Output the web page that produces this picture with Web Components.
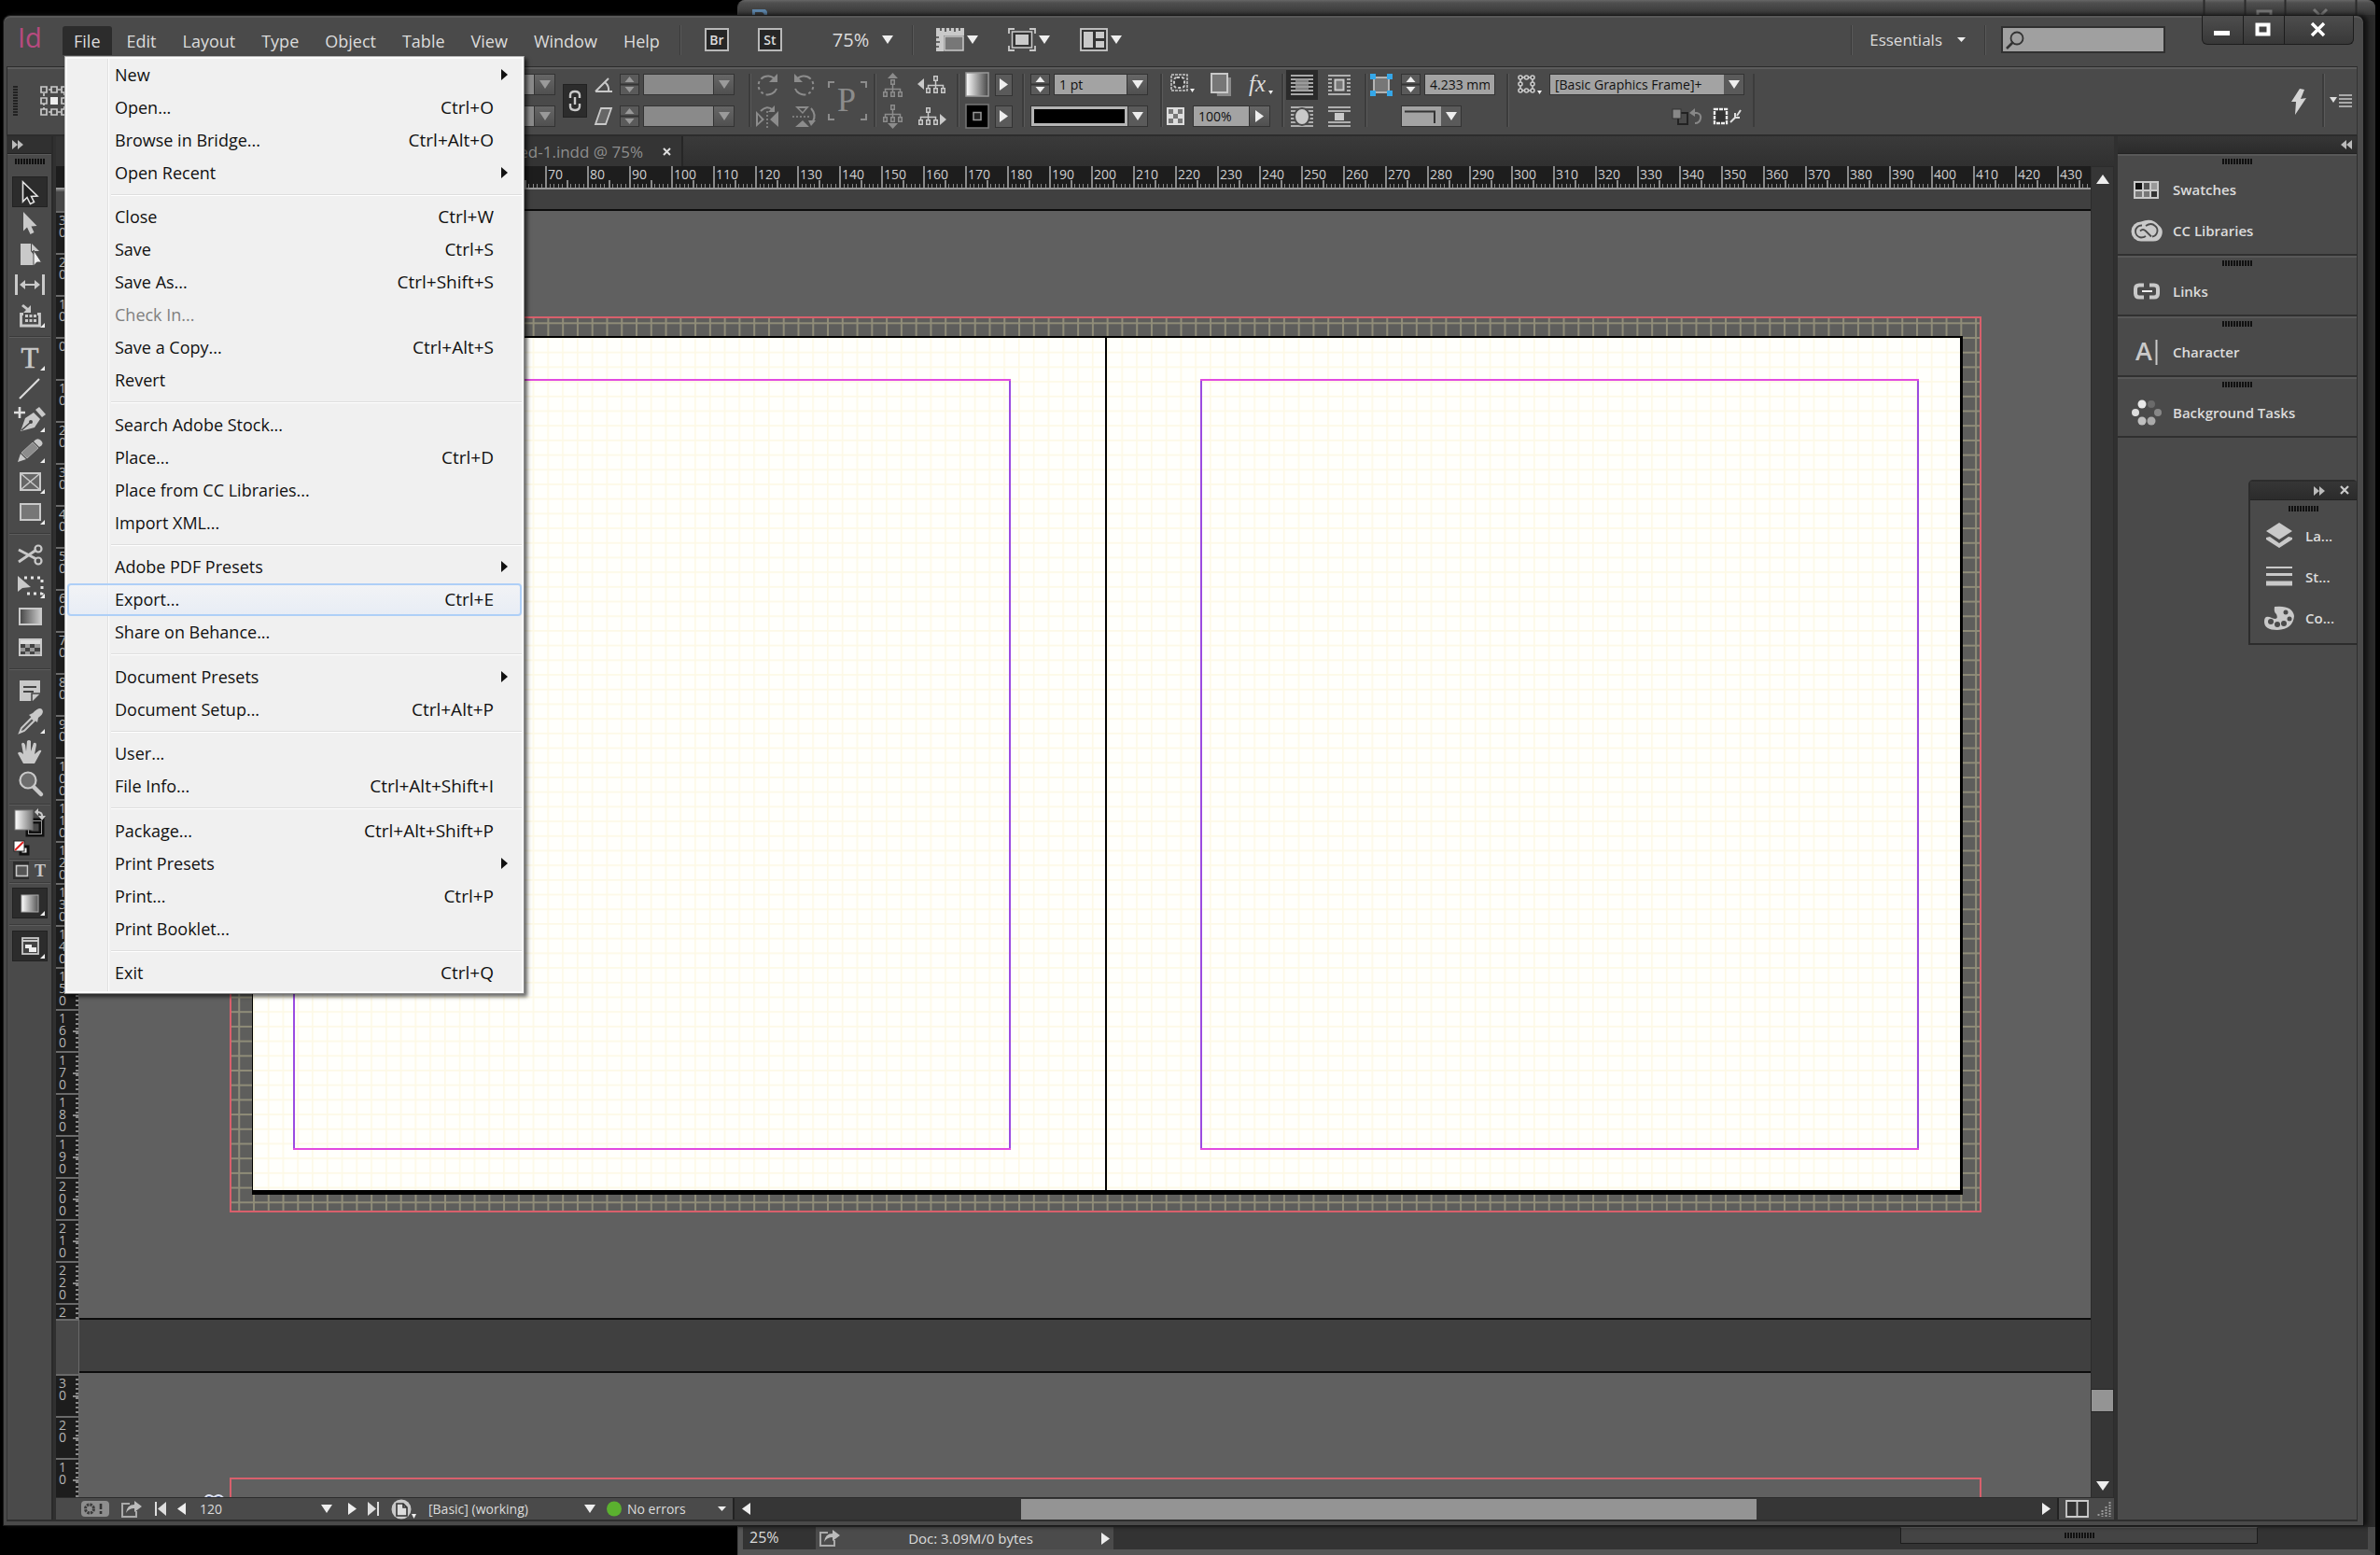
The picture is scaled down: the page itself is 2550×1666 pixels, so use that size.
<!DOCTYPE html>
<html lang="en">
<head>
<meta charset="utf-8">
<title>InDesign</title>
<style>
html,body{margin:0;background:#000}
body{position:relative;display:flex;height:100vh;overflow:hidden;font-family:"Open Sans","Noto Sans",sans-serif;font-size:14px;color:#dcdcdc}
back-window{position:absolute;inset:0 5px 0 790px}
app-window{flex:1;margin:16px 17px 31px 3px}
</style>
</head>
<body>
<back-window></back-window>
<app-window>
  <menu-bar slot="menu"></menu-bar>
  <control-bar slot="control"></control-bar>
  <tool-panel slot="tools"></tool-panel>
  <doc-view slot="doc"></doc-view>
  <dock-area slot="dock">
    <panel-group>
      <panel-tab icon="swatches">Swatches</panel-tab>
      <panel-tab icon="cc">CC Libraries</panel-tab>
    </panel-group>
    <panel-group><panel-tab icon="links">Links</panel-tab></panel-group>
    <panel-group><panel-tab icon="character">Character</panel-tab></panel-group>
    <panel-group><panel-tab icon="tasks">Background Tasks</panel-tab></panel-group>
  </dock-area>
  <float-panel slot="over">
    <panel-tab icon="layers">La...</panel-tab>
    <panel-tab icon="stroke">St...</panel-tab>
    <panel-tab icon="palette">Co...</panel-tab>
  </float-panel>
  <drop-menu slot="over">
    <menu-row arrow>New</menu-row>
    <menu-row key="Ctrl+O">Open...</menu-row>
    <menu-row key="Ctrl+Alt+O">Browse in Bridge...</menu-row>
    <menu-row arrow>Open Recent</menu-row>
    <hr>
    <menu-row key="Ctrl+W">Close</menu-row>
    <menu-row key="Ctrl+S">Save</menu-row>
    <menu-row key="Ctrl+Shift+S">Save As...</menu-row>
    <menu-row disabled>Check In...</menu-row>
    <menu-row key="Ctrl+Alt+S">Save a Copy...</menu-row>
    <menu-row>Revert</menu-row>
    <hr>
    <menu-row>Search Adobe Stock...</menu-row>
    <menu-row key="Ctrl+D">Place...</menu-row>
    <menu-row>Place from CC Libraries...</menu-row>
    <menu-row>Import XML...</menu-row>
    <hr>
    <menu-row arrow>Adobe PDF Presets</menu-row>
    <menu-row key="Ctrl+E" active>Export...</menu-row>
    <menu-row>Share on Behance...</menu-row>
    <hr>
    <menu-row arrow>Document Presets</menu-row>
    <menu-row key="Ctrl+Alt+P">Document Setup...</menu-row>
    <hr>
    <menu-row>User...</menu-row>
    <menu-row key="Ctrl+Alt+Shift+I">File Info...</menu-row>
    <hr>
    <menu-row key="Ctrl+Alt+Shift+P">Package...</menu-row>
    <menu-row arrow>Print Presets</menu-row>
    <menu-row key="Ctrl+P">Print...</menu-row>
    <menu-row>Print Booklet...</menu-row>
    <hr>
    <menu-row key="Ctrl+Q">Exit</menu-row>
  </drop-menu>
</app-window>
<script>
const G='#c9c9c9', DIM='#8c8c8c';
const fly='<path d="M32 23v5h-5z" fill="#eee"/>';
const cursor='M8.5 4V25L13 20.5 16.5 27.5 20.5 25.5 17.5 19.5 24 19Z';
const tree=(c)=>`<path d="M11.5 5v5M3.500 14v-3.500h16V14M11.500 10v4" fill="none" stroke="${c}" stroke-width="1.500"/><path d="M9 0h5v6H9zM1 13h5v6H1zM9 13h5v6H9zM17 13h5v6h-5z" fill="${c}"/><path d="M10.500 1.500h2v3h-2zM2.500 14.500h2v3h-2zM10.500 14.500h2v3h-2zM18.500 14.500h2v3h-2z" fill="#4a4a4a"/>`;
const lines=(a)=>a.map(y=>`<path d="M0 ${y}h24" stroke="${G}" stroke-width="1.600"/>`).join('');
const grad=(id,a,b)=>`<defs><linearGradient id="${id}"><stop offset="0" stop-color="${a}"/><stop offset="1" stop-color="${b}"/></linearGradient></defs>`;
const ICONS={
 // tools
 select:[32,30,`<path d="${cursor}" fill="#222" stroke="#e4e4e4" stroke-width="1.600"/>`],
 direct:[32,30,`<path d="M9 3V23.500L13 19.500 16.500 27 20.500 25 17.500 18.500 23.500 18Z" fill="${G}"/>`],
 page:[32,30,`<path d="M6 4h11v8l4 5v10H6z" fill="${G}"/><path d="M18 4l8 8h-8z" fill="${G}"/><path d="M20 11v17l3.500-4 5 0z" fill="#eee" stroke="#4a4a4a"/>`],
 gap:[32,30,`<path d="M1.500 4v22M30.500 4v22" stroke="${G}" stroke-width="3"/><path d="M7 15h18" stroke="${G}" stroke-width="2"/><path d="M5 15l6-5v10zM27 15l-6-5v10z" fill="${G}"/>`],
 collect:[32,30,`<path d="M6 13.500H9M24 13.500h3M6.500 12v14h20V12" fill="none" stroke="${G}" stroke-width="2.800"/><path d="M11 14h3v3h-3zM15.500 14h3v3h-3zM20 14h3v3h-3zM11 19h3v3h-3zM15.500 19h3v3h-3zM20 19h3v3h-3z" fill="${G}"/><path d="M9 3l5 4 3-3v8H9l3-3-5-4z" fill="${G}"/>${fly}`],
 type:[32,30,`<text x="16" y="25" text-anchor="middle" font-family="Liberation Serif" font-size="31" fill="${G}" stroke="${G}" stroke-width="0.600">T</text>${fly}`],
 line:[32,30,`<path d="M5 25L26 4" stroke="#ddd" stroke-width="2.200"/>`],
 pen:[32,30,`<path d="M5 1v12M-1 7h12" stroke="#ddd" stroke-width="2.600"/><path d="M6 27l5-14 9-6 7 7-6 9z" fill="${G}"/><path d="M22 4l4-3 7 8-4 3z" fill="${G}"/><path d="M7 26l9-8" stroke="#444" stroke-width="1.500"/><circle cx="17" cy="17" r="2" fill="#444"/>${fly}`],
 pencil:[32,30,`<path d="M3 27l3-9 6 6z" fill="${G}"/><path d="M7 17L19 6l6 6-12 11z" fill="#8c8c8c" stroke="#aaa"/><path d="M20 5q4-5 8-1t-2 7z" fill="${G}"/>${fly}`],
 frame:[32,30,`<rect x="6" y="6" width="21" height="18" fill="#666" stroke="${G}" stroke-width="2"/><path d="M7 7l19 16M26 7L7 23" stroke="${G}" stroke-width="1.500"/>${fly}`],
 rect:[32,30,`<rect x="6" y="6" width="21" height="17" fill="#777" stroke="${G}" stroke-width="2"/>${fly}`],
 scissors:[32,30,`<path d="M4 9l19 10M4 22L23 9" stroke="${G}" stroke-width="3"/><circle cx="25" cy="8" r="3.500" fill="none" stroke="${G}" stroke-width="2.200"/><circle cx="25" cy="21" r="3.500" fill="none" stroke="${G}" stroke-width="2.200"/>`],
 transform:[32,30,`<path d="M3 4v17l5-4 9-1z" fill="${G}"/><path d="M10 6h19v17H11" fill="none" stroke="#e4e4e4" stroke-width="3" stroke-dasharray="3 4"/>${fly}`],
 gradient:[32,30,`${grad('ga','#444','#ccc')}<rect x="5" y="6" width="23" height="17" fill="url(#ga)" stroke="${G}" stroke-width="2"/>`],
 feather:[32,30,`<rect x="5" y="6" width="23" height="17" fill="#999" stroke="${G}" stroke-width="2"/><path d="M6 11h5v4H6zM16 11h5v4h-5zM11 15h5v4h-5zM21 15h6v4h-6zM6 19h5v3H6zM16 19h5v3h-5z" fill="#444"/><path d="M6 7h21v4H6z" fill="#ddd"/>`],
 note:[32,30,`<path d="M5 4h22v14l-8 8H5z" fill="${G}"/><path d="M9 11h14M9 16h11" stroke="#444" stroke-width="2"/><path d="M18 27v-9h9" fill="none" stroke="#444" stroke-width="1.500"/>`],
 dropper:[32,30,`<path d="M5 27l2-5L18 11l3 3-11 11z" fill="#555" stroke="${G}" stroke-width="2"/><path d="M15 8l4-2q7-7 10-4 3 4-4 9l-1 5z" fill="${G}"/>${fly}`],
 hand:[32,30,`<path d="M9 27L3 16q2-3 6 1L7 6q2-3 4 1l1 7 1-11q2-2 4 0v11l3-9q3-1 3 2l-2 10 5-4q4-1 1 3l-6 11z" fill="${G}"/>`],
 zoom:[32,30,`<path d="M19 18l9 9" stroke="${G}" stroke-width="4.500" stroke-linecap="round"/><circle cx="14" cy="12" r="8.500" fill="#6d6d6d" stroke="${G}" stroke-width="2.200"/>`],
 fillstroke:[34,36,`${grad('gb','#fff','#777')}<rect x="15.500" y="14.500" width="14" height="14" fill="none" stroke="#111" stroke-width="6"/><rect x="15.500" y="14.500" width="14" height="14" fill="none" stroke="#999"/><rect x="1" y="3" width="19" height="21" fill="url(#gb)" stroke="#777"/><path d="M25 5q6 0 5 6" fill="none" stroke="${G}" stroke-width="2"/><path d="M22 5l4-4v8zM26 9h8l-4 5z" fill="${G}"/>`],
 defaults:[34,20,`<rect x="9" y="8" width="8" height="8" fill="#eee" stroke="#111" stroke-width="3"/><rect x="2" y="2" width="11" height="11" fill="#fff" stroke="#222"/><path d="M3 12L12 3" stroke="#d22" stroke-width="2"/>`],
 container:[38,22,`<rect x="1" y="1" width="17" height="19" fill="#2c2c2c"/><rect x="4.500" y="5.500" width="12" height="11" fill="#555" stroke="${G}" stroke-width="1.600"/><text x="30" y="17" text-anchor="middle" font-family="Liberation Serif" font-weight="bold" font-size="18" fill="${G}">T</text>`],
 gradmode:[32,30,`${grad('gc','#fff','#555')}<rect x="7" y="6" width="18" height="18" fill="url(#gc)" stroke="#aaa"/>${fly}`],
 screen:[32,30,`<rect x="8" y="6" width="17" height="17" fill="#444" stroke="${G}" stroke-width="1.800"/><path d="M8 9h17" stroke="${G}" stroke-width="2"/><path d="M11 13h7v4h-7zM15 16h8v5h-8z" fill="#eee"/>${fly}`],
 // panels
 swatches:[34,30,`<rect x="3" y="6" width="27" height="19" fill="${G}"/><path d="M5 8h7v7H5z" fill="#111"/><path d="M14 8h6v7h-6z" fill="#555"/><path d="M22 8h6v7h-6z" fill="#999"/><path d="M5 17h7v6H5zM14 17h6v6h-6z" fill="#777"/><path d="M22 17h6v6h-6z" fill="#333"/>`],
 cc:[34,30,`<path d="M11 26.500a10.500 10.500 0 0 1 0-21q12-5 19 4a9.500 9.500 0 0 1-6 17z" fill="${G}"/><path d="M12 9.500a6.500 6.500 0 0 0-1 13q3 0 5-1.500M10 15.500q3-3 6 0l6 6M16 10q6-4 10 0a6.500 6.500 0 0 1-3 11.500" fill="none" stroke="#4a4a4a" stroke-width="1.800"/>`],
 links:[34,30,`<path d="M14 8.500H9q-4 0-4 4v5q0 4 4 4h5M20 8.500h5q4 0 4 4v5q0 4-4 4h-5" fill="none" stroke="${G}" stroke-width="4"/><path d="M12 15h11" stroke="#eee" stroke-width="2"/>`],
 character:[34,30,`<text x="5" y="24" font-family="Open Sans" font-weight="600" font-size="27" fill="${G}">A</text><path d="M27.500 2v27" stroke="${G}" stroke-width="2"/>`],
 tasks:[34,30,`<circle cx="12" cy="6" r="4.500" fill="#e8e8e8"/><circle cx="22" cy="6" r="4" fill="#6a6a6a"/><circle cx="29" cy="15" r="4" fill="#888"/><circle cx="22" cy="24" r="4.500" fill="#aaa"/><circle cx="12" cy="24" r="4.500" fill="#c0c0c0"/><circle cx="5" cy="15" r="4" fill="#ddd"/>`],
 layers:[34,30,`<path d="M17 1l14 9-14 9-14-9z" fill="${G}"/><path d="M3 17l4-1 10 7 10-7 4 1v2l-14 9-14-9z" fill="${G}"/>`],
 stroke:[34,30,`<path d="M3 5h28" stroke="${G}" stroke-width="2"/><path d="M3 12.500h28" stroke="${G}" stroke-width="3"/><path d="M3 22h28" stroke="${G}" stroke-width="5"/>`],
 palette:[34,30,`<path d="M12 3q19-2 21 10-1 14-18 15Q1 28 1 19q0-8 8-4 8 3 5-4-3-2-2-8z" fill="${G}"/><g fill="#4a4a4a"><circle cx="8" cy="19" r="3"/><circle cx="15" cy="22" r="3"/><circle cx="22" cy="21" r="3"/><circle cx="28" cy="16" r="2.500"/><circle cx="24" cy="9" r="2.500"/></g>`],
 // application bar
 rulers:[30,25,`<path d="M0 0h30v8H8v17H0z" fill="${G}"/><path d="M5 0v3M10 0v4M15 0v3M20 0v4M25 0v3M0 10h3M0 15h4M0 20h3" stroke="#444" stroke-width="1.600"/><rect x="9" y="9" width="20" height="15" fill="#777" stroke="${G}" stroke-width="1.500"/>`],
 fitpage:[30,25,`<path d="M1 6V1h6M23 1h6v5M29 19v5h-6M7 24H1v-5" fill="none" stroke="${G}" stroke-width="1.800"/><rect x="4.500" y="4" width="21" height="17" fill="#333" stroke="${G}" stroke-width="1.500"/><rect x="8" y="7" width="14" height="11" fill="${G}"/>`],
 arrange:[30,25,`<rect x="1" y="1" width="28" height="23" fill="#333" stroke="${G}" stroke-width="1.800"/><path d="M4 4h10v17H4zM17 4h9v7h-9zM17 14h9v7h-9z" fill="${G}"/>`],
 lens:[22,22,`<circle cx="13" cy="9" r="6.500" fill="none" stroke="#333" stroke-width="1.800"/><path d="M9 13l-7 7" stroke="#333" stroke-width="2.600"/>`],
 min:[18,16,`<path d="M0 9h17v5H0z" fill="#fff"/>`],
 max:[18,16,`<rect x="2.500" y="2.500" width="12" height="10" fill="none" stroke="#fff" stroke-width="4"/>`],
 close:[18,16,`<path d="M2 1l13 13M15 1L2 14" stroke="#fff" stroke-width="3.400"/>`],
 dn:[12,9,`<path d="M0 0h12L6 9z" fill="#eee"/>`],
 dnd:[12,9,`<path d="M0 0h12L6 9z" fill="#9a9a9a"/>`],
 dns:[9,5,`<path d="M0 0h9L4.500 5z" fill="#eee"/>`],
 up:[14,10,`<path d="M0 10h14L7 0z" fill="#eee"/>`],
 down:[14,10,`<path d="M0 0h14L7 10z" fill="#eee"/>`],
 rt:[9,13,`<path d="M0 0v13l9-6.500z" fill="#eee"/>`],
 lt:[9,13,`<path d="M9 0v13L0 6.500z" fill="#eee"/>`],
 first:[12,15,`<path d="M1 0v15" stroke="#ddd" stroke-width="2"/><path d="M12 0v15L3 7.500z" fill="#ddd"/>`],
 last:[12,15,`<path d="M11 0v15" stroke="#ddd" stroke-width="2"/><path d="M0 0v15l9-7.500z" fill="#ddd"/>`],
 chr:[12,10,`<path d="M0 0l6 5-6 5zM6 0l6 5-6 5z" fill="#bbb"/>`],
 chl:[12,10,`<path d="M6 0L0 5l6 5zM12 0L6 5l6 5z" fill="#bbb"/>`],
 x:[12,11,`<path d="M2 1l8 8M10 1L2 9" stroke="#ccc" stroke-width="2.200"/>`],
 xs:[9,9,`<path d="M1 1l7 7M8 1L1 8" stroke="#ddd" stroke-width="2"/>`],
 // control bar
 proxy:[30,32,`<g fill="none" stroke="${G}" stroke-width="1.700"><path d="M4 4h22v24H4z" stroke-dasharray="3 2"/><path d="M1 1h6v6H1zM12 1h6v6h-6zM23 1h6v6h-6zM1 13h6v6H1zM23 13h6v6h-6zM1 25h6v6H1zM12 25h6v6h-6zM23 25h6v6h-6z" fill="#4a4a4a"/></g><path d="M11 12h8v8h-8z" fill="#eee"/>`],
 chain:[14,24,`<g fill="none" stroke="${G}" stroke-width="2.400"><path d="M2 9V6q0-4 5-4t5 4v3M2 15v3q0 4 5 4t5-4v-3"/><path d="M7 8v8"/></g>`],
 angle:[20,16,`<path d="M1 15L15 1M1 15h18M11 5q5 4 4 10" fill="none" stroke="${G}" stroke-width="2"/>`],
 shear:[20,20,`<path d="M7 1h11l-6 17H1z" fill="#666" stroke="${G}" stroke-width="1.800"/>`],
 cw:[26,24,`<path d="M22 7A10 10 0 1 0 23 16" fill="none" stroke="${DIM}" stroke-width="2" stroke-dasharray="18 3 3 3 3 3 3 3"/><path d="M24 0v9h-9z" fill="${DIM}"/>`],
 ccw:[26,24,`<path d="M4 7A10 10 0 1 1 3 16" fill="none" stroke="${DIM}" stroke-width="2" stroke-dasharray="18 3 3 3 3 3 3 3"/><path d="M2 0v9h9z" fill="${DIM}"/>`],
 fliph:[26,24,`<path d="M1 6v17l9-8zM25 6v17l-9-8z" fill="${DIM}"/><path d="M13 6v18" stroke="${DIM}" stroke-width="1.600" stroke-dasharray="2 2"/><path d="M6 6q7-7 13-1" fill="none" stroke="${DIM}" stroke-width="2"/><path d="M21 0v7h-7z" fill="${DIM}"/><path d="M3 10v9l4-4z" fill="#4a4a4a"/>`],
 flipv:[26,24,`<path d="M3 1h15l-7 8zM3 23h15l-7-7z" fill="${DIM}"/><path d="M0 12h20" stroke="${DIM}" stroke-width="1.600" stroke-dasharray="2 2"/><path d="M20 3q6 7 2 14" fill="none" stroke="${DIM}" stroke-width="2"/><path d="M17 16h8l-5 6z" fill="${DIM}"/><path d="M7 3h7l-3 4z" fill="#4a4a4a"/>`],
 pframe:[42,42,`<path d="M1 7V1h6M35 1h6v6M41 35v6h-6M7 41H1v-6" fill="none" stroke="${DIM}" stroke-width="2"/><text x="20" y="32" text-anchor="middle" font-family="Liberation Serif" font-size="36" fill="${DIM}">P</text>`],
 treeup:[24,26,`<path d="M6 6h11l-5.500-6z" fill="${DIM}"/><g transform="translate(0 7)">${tree(DIM)}</g>`],
 treedn:[24,26,`<path d="M6 20h11l-5.500 6z" fill="${DIM}"/>${tree(DIM)}`],
 treel:[32,20,`<path d="M7 3v12L0 9z" fill="${G}"/><g transform="translate(8 0)">${tree(G)}</g>`],
 treer:[32,20,`<path d="M24 7v12l7-6z" fill="${G}"/>${tree(G)}`],
 fill:[26,27,`${grad('gd','#fff','#444')}<rect x="1" y="1" width="24" height="25" fill="url(#gd)" stroke="#999" stroke-width="1.500"/>`],
 strokebox:[26,27,`<rect x="1" y="1" width="24" height="25" fill="#000" stroke="#777" stroke-width="1.500"/><rect x="9" y="9.500" width="8" height="8" fill="#222" stroke="#999" stroke-width="1.500"/>`],
 dash:[26,22,`<rect x="1" y="2" width="17" height="17" fill="none" stroke="${G}" stroke-width="1.500" stroke-dasharray="3 1"/><rect x="4" y="5" width="11" height="11" rx="3" fill="#3a3a3a" stroke="${G}" stroke-width="2" stroke-dasharray="3 2"/><path d="M21 17h5l-2.500 4z" fill="#eee"/>`],
 shadow:[24,26,`<path d="M5 5h17v20H7z" fill="#8a8a8a"/><rect x="1" y="1" width="17" height="20" fill="#777" stroke="${G}" stroke-width="2"/>`],
 fx:[26,26,`<text x="0" y="20" font-family="Liberation Serif" font-style="italic" font-size="25" fill="#ddd">fx</text><path d="M21 19h5l-2.500 4z" fill="#eee"/>`],
 opacity:[19,19,`<rect width="19" height="19" fill="#ddd"/><path d="M2 2h5v5H2zM12 2h5v5h-5zM7 7h5v5H7zM2 12h5v5H2zM12 12h5v5h-5z" fill="#777"/>`],
 wrap0:[24,24,`${lines([2,6,10,14,18,22])}<rect x="5" y="5" width="14" height="13" fill="#999" opacity=".8"/>`],
 wrap1:[24,24,`${lines([2,6,10,14,18,22])}<rect x="4" y="4" width="16" height="16" fill="#4a4a4a"/><rect x="7.500" y="6.500" width="9" height="11" fill="#777" stroke="${G}" stroke-width="2"/>`],
 wrap2:[24,24,`${lines([2,6,10,14,18,22])}<ellipse cx="12" cy="12" rx="8" ry="9" fill="${G}" stroke="#4a4a4a" stroke-width="2"/>`],
 wrap3:[24,24,`${lines([2,6,18,22])}<path d="M7 8h10v8H7z" fill="${G}"/>`],
 corner:[24,24,`<rect x="4" y="4" width="16" height="16" fill="#777" stroke="${G}" stroke-width="1.600"/><path d="M0 0h6v6H0zM18 0h6v6h-6zM0 18h6v6H0zM18 18h6v6h-6z" fill="#35a7e8"/>`],
 cornerline:[36,16,`<path d="M0 3.500h32V16" fill="none" stroke="#333" stroke-width="2"/>`],
 objstyle:[26,22,`<g fill="none" stroke="${G}" stroke-width="1.600"><path d="M3 3h13v14H3z"/><circle cx="3" cy="3" r="2" fill="#444"/><circle cx="9.500" cy="3" r="2" fill="#444"/><circle cx="16" cy="3" r="2" fill="#444"/><circle cx="3" cy="10" r="2" fill="#444"/><circle cx="16" cy="10" r="2" fill="#444"/><circle cx="3" cy="17" r="2" fill="#444"/><circle cx="9.500" cy="17" r="2" fill="#444"/><circle cx="16" cy="17" r="2" fill="#444"/></g><path d="M21 17h5l-2.500 4z" fill="#eee"/>`],
 clear:[34,20,`<path d="M8 6h10v12H8z" fill="none" stroke="#222" stroke-width="2"/><rect x="2" y="2" width="9" height="10" fill="#888" stroke="#333"/><path d="M23 6h5q5 1 4 6t-6 5" fill="none" stroke="#888" stroke-width="2"/><path d="M20 6l6-5v9z" fill="#888"/>`],
 clear2:[30,20,`<rect x="1" y="2" width="13" height="15" fill="#333" stroke="#eee" stroke-width="2.400" stroke-dasharray="4 1"/><path d="M18 16l5-5M23 11v-5M23 11h5M25 9l4-6" stroke="#ddd" stroke-width="2"/>`],
 bolt:[18,28,`<path d="M10 0L1 14l5 0-1 14L17 10l-6 1 4-10z" fill="#d4d4d4"/>`],
 flyout:[24,16,`<path d="M0 4h8l-4 6z" fill="#ddd"/><path d="M10 2h14M10 6h14M10 10h14M10 14h14" stroke="${G}" stroke-width="1.500"/>`],
 spin:[21,23,`<rect x=".5" y=".5" width="20" height="22" fill="#5a5a5a" stroke="#333"/><path d="M0 11.500h21" stroke="#333" stroke-width="2"/><path d="M5.500 9h10l-5-6zM5.500 14h10l-5 6z" fill="var(--tri,#eee)"/>`],
 // status bar
 preflight:[30,17,`<rect width="30" height="17" rx="4" fill="#8e8e8e"/><circle cx="9" cy="8.500" r="4.500" fill="none" stroke="#3c3c3c" stroke-width="3" stroke-dasharray="2.500 1"/><path d="M21 3v6M21 11v3" stroke="#333" stroke-width="2.600"/>`],
 share:[22,18,`<path d="M9 3H1v14h15v-6" fill="none" stroke="#aaa" stroke-width="2"/><path d="M5 13q1-9 9-9V0l8 6-8 6V8q-6 0-9 5z" fill="#bbb"/>`],
 docbtn:[28,22,`<ellipse cx="11" cy="11" rx="10.500" ry="10.500" fill="${G}"/><path d="M6 5h7l4 4v9H6zM13 5v4h4" fill="#ddd" stroke="#333" stroke-width="1.600"/><path d="M22 16h5l-2.500 5z" fill="#eee"/>`],
 ok:[16,17,`<circle cx="8" cy="8.500" r="8" fill="#5bb12f"/>`],
 split:[25,19,`<path d="M1 1h23v17H1zM12.500 1v17" fill="#333" stroke="#ccc" stroke-width="1.800"/>`],
 grip:[16,16,`<path d="M14.500 0v16M10.500 5v11M6.500 9v7M2.500 13v3" stroke="#999" stroke-width="2" stroke-dasharray="2 1"/>`]
};
const comp=(name,html,init)=>{
  const t=document.createElement('template');
  t.innerHTML=html;
  customElements.define(name,class extends HTMLElement{
    constructor(){super();this.attachShadow({mode:'open'}).append(t.content.cloneNode(true))}
    connectedCallback(){init&&init.call(this,this.shadowRoot)}
  });
};
const base=`<style>:host,*{box-sizing:border-box}button,input,select{font:inherit;color:inherit;background:none;border:0;padding:0;margin:0;border-radius:0;appearance:none;outline:0}button{display:flex;align-items:center;justify-content:center}</style>`;
const gripCss='width:32px;height:6px;background:repeating-linear-gradient(90deg,#111 0 2px,#4a4a4a 2px 3px)';

comp('ui-icon','<style>:host{display:block;flex:none}svg{display:block;overflow:visible}</style>',function(r){
  const [w,h,s]=ICONS[this.getAttribute('name')];
  r.innerHTML+=`<svg width="${w}" height="${h}" viewBox="0 0 ${w} ${h}" aria-hidden="true">${s}</svg>`;
});

comp('back-window',base+`<style>
:host{display:flex;flex-direction:column;justify-content:space-between;border-radius:8px 8px 0 0;background:#2b2b2b;overflow:hidden;border-left:1px solid #444}
.top{height:16px;background:linear-gradient(#666,#4f4f4f 3px,#363636);display:flex;justify-content:space-between;padding:0 12px 0 15px;align-items:end}
.top svg{display:block}
.bot{height:30px;background:#333;border-bottom:6px solid #555;border-left:5px solid #555;display:flex;border-right:8px solid #4a4a4a}
.zoom{width:78px;padding-left:7px;font-size:16px;line-height:22px;background:#333}
.info{width:319px;display:flex;align-items:center;padding:0 4px;background:#4b4b4b;font-size:15px;justify-content:space-between}
.tray{width:383px;height:18px;margin-left:auto;margin-right:118px;background:#444;border:1px solid #1c1c1c;border-top-color:#666;display:flex;justify-content:center;align-items:center}
.tray i{${gripCss}}
</style><div class="top"><svg width="16" height="6"><path d="M1 6V1h9q4 0 5 5" fill="none" stroke="#5d86ab" stroke-width="4"/></svg>
<svg width="174" height="16"><path d="M2.500 0v16M46.500 0v16M89.500 0v16M165.500 0v16" stroke="#2a2a2a" stroke-width="2"/><path d="M60 16v-4h14v4M120 10l6 6M134 10l-6 6" fill="none" stroke="#777" stroke-width="3"/></svg></div>
<div class="bot"><div class="zoom">25%</div><div class="info"><ui-icon name="share"></ui-icon><span>Doc: 3.09M/0 bytes</span><ui-icon name="rt"></ui-icon></div><div class="tray"><i></i></div></div>`);

comp('app-window',base+`<style>
:host{display:flex;flex-direction:column;position:relative;min-width:0;background:#4a4a4a;border:1px solid #1a1a1a;border-right-color:#111;border-radius:8px 8px 0 0;box-shadow:inset 0 2px #585858,4px 0 5px #111;padding:0 6px 4px 3px}
.main{flex:1;display:flex;min-height:0;border-right:1px solid #2e2e2e;border-bottom:2px solid #2e2e2e}
slot[name=over]{display:contents}
</style><slot name="menu"></slot><slot name="control"></slot><div class="main"><slot name="tools"></slot><slot name="doc"></slot><slot name="dock"></slot></div><slot name="over"></slot>`);

comp('menu-bar',base+`<style>
:host{display:flex;height:54px;font-size:18px;color:#dcdcdc;align-items:flex-start;flex:none}
.logo{width:58px;padding-left:12px;font:29px/46px "Open Sans",sans-serif;color:#b84a80}
nav{display:flex;padding-top:11px}
nav button{height:31px;padding:0 12px;margin:0 2px}
nav button.on{background:#2c2c2c;border-radius:3px 3px 0 0}
i{width:2px;height:32px;margin-top:10px;background:#3a3a3a;border-right:1px solid #595959;flex:none}
.app{width:26px;height:25px;border:2px solid #b9b9b9;background:#262626;font-size:14px;font-weight:600;line-height:1}
.row{display:flex;align-items:center;height:51px}
select{font-size:20px;width:44px}
.ess{font-size:17px;display:flex;gap:16px}
label{display:flex;align-items:center;width:176px;height:29px;background:#a0a0a0;border:2px solid #303030;padding-left:2px}
input{flex:1;min-width:0}
.win{display:flex;height:31px;width:163px;margin:0 4px 0 39px;border:1px solid #1d1d1d;border-top:0;border-radius:0 0 6px 6px;background:linear-gradient(#4d4d4d,#383838)}
.win button{flex:44;border-right:1px solid #1d1d1d}.win button:last-child{flex:75;border:0}
</style><div class="logo">Id</div>
<nav><button class="on">File</button><button>Edit</button><button>Layout</button><button>Type</button><button>Object</button><button>Table</button><button>View</button><button>Window</button><button>Help</button></nav>
<i style="margin-left:7px"></i>
<div class="row" style="margin-left:25px;gap:31px"><button class="app">Br</button><button class="app">St</button></div>
<div class="row" style="margin:0 20px 0 54px;gap:9px"><select aria-label="Zoom level"><option>75%</option></select><ui-icon name="dn"></ui-icon></div>
<i></i>
<div class="row" style="margin-left:24px;gap:32px"><button style="gap:3px" aria-label="View options"><ui-icon name="rulers"></ui-icon><ui-icon name="dn"></ui-icon></button><button style="gap:3px" aria-label="Screen mode"><ui-icon name="fitpage"></ui-icon><ui-icon name="dn"></ui-icon></button><button style="gap:3px" aria-label="Arrange documents"><ui-icon name="arrange"></ui-icon><ui-icon name="dn"></ui-icon></button></div>
<i style="margin-left:auto"></i>
<div class="row" style="padding:0 20px 0 18px"><button class="ess">Essentials<ui-icon name="dns"></ui-icon></button></div>
<i></i>
<div class="row" style="margin-left:16px"><label aria-label="Search"><ui-icon name="lens"></ui-icon><input aria-label="Search"></label></div>
<div class="win"><button aria-label="Minimize"><ui-icon name="min"></ui-icon></button><button aria-label="Maximize"><ui-icon name="max"></ui-icon></button><button aria-label="Close"><ui-icon name="close"></ui-icon></button></div>`);

comp('num-field',base+`<style>
:host{display:flex;flex:none;height:23px;border:1px solid #333;background:#5a5a5a;font-size:14px;color:#111}
input{flex:1;min-width:0;background:#a3a3a3;padding:0 5px}
:host([dim]) input{background:#8a8a8a}
button{width:22px;border-left:1px solid #333;background:linear-gradient(#666,#505050)}
</style><input><button aria-label="Options"></button>`,function(r){
  const i=r.querySelector('input'),b=r.querySelector('button');
  i.value=this.getAttribute('value')||'';i.setAttribute('aria-label',this.getAttribute('label'));
  const a=this.getAttribute('arrow');
  if(a)b.innerHTML=`<ui-icon name="${a}"></ui-icon>`;else b.remove();
});

comp('control-bar',base+`<style>
:host{display:flex;height:75px;flex:none;border:1px solid #2c2c2c;border-bottom-width:2px;border-right-color:#333;box-shadow:inset 0 2px #5c5c5c;padding-top:7px;color:#ddd}
section{display:grid;grid-template-rows:23px 23px;row-gap:11px;column-gap:4px;align-content:start;align-items:center;justify-content:start;flex:none;height:57px;border-left:2px solid #3c3c3c;box-shadow:inset 1px 0 #5a5a5a}
section>*{grid-row:1}section>.b{grid-row:2}section>.two{grid-row:1/3}
.sq{width:19px;height:24px;border:1px solid #333;background:#5a5a5a}
.lk{width:26px;height:36px;background:#2c2c2c;border:1px solid #222}
.on{width:34px;height:32px;background:#2a2a2a}
.grip{width:5px;height:32px;margin:13px 24px 0 6px;background:repeating-linear-gradient(#222 0 2px,#4a4a4a 2px 3px)}
select{height:22px;background:#a3a3a3;border:1px solid #333;color:#111;font-size:14px;padding:0 5px}
.line{width:104px;height:21px;background:#000;border:3px solid #b4b4b4;outline:1px solid #333}
.combo{display:flex;border:1px solid #333;background:#5a5a5a;height:23px}.combo>button{width:21px}.combo>select{border:0;height:21px}
.geo{border:0;box-shadow:none;margin-left:447px;width:282px;grid-template-columns:75px 42px 27px 25px 98px;column-gap:0}
.geo .lk{margin-left:8px}
</style>
<div class="grip"></div><ui-icon name="proxy" style="margin-top:13px"></ui-icon>
<section class="geo">
<num-field dim label="Scale X" arrow="dnd"></num-field><button class="lk two" aria-label="Constrain"><ui-icon name="chain"></ui-icon></button><ui-icon name="angle"></ui-icon><ui-icon name="spin" style="--tri:#999"></ui-icon><num-field dim label="Rotation" arrow="dnd"></num-field>
<num-field class="b" dim label="Scale Y" arrow="dnd"></num-field><ui-icon class="b" name="shear" style="grid-column:3"></ui-icon><ui-icon class="b" name="spin" style="grid-column:4;--tri:#999"></ui-icon><num-field class="b" dim label="Shear" arrow="dnd" style="grid-column:5"></num-field>
</section>
<section style="width:134px;padding-left:5px;column-gap:14px"><ui-icon name="cw"></ui-icon><ui-icon name="ccw"></ui-icon><ui-icon class="two" name="pframe" style="margin-left:-2px"></ui-icon><ui-icon class="b" name="fliph"></ui-icon><ui-icon class="b" name="flipv"></ui-icon></section>
<section style="width:89px;padding-left:7px;column-gap:14px"><ui-icon name="treeup"></ui-icon><ui-icon name="treel"></ui-icon><ui-icon class="b" name="treedn"></ui-icon><ui-icon class="b" name="treer"></ui-icon></section>
<section style="width:70px;padding-left:7px;column-gap:6px"><ui-icon name="fill"></ui-icon><button class="sq" aria-label="Fill"><ui-icon name="rt"></ui-icon></button><ui-icon class="b" name="strokebox"></ui-icon><button class="sq b" aria-label="Stroke"><ui-icon name="rt"></ui-icon></button></section>
<section style="width:148px;padding-left:7px;grid-template-columns:21px 101px"><ui-icon name="spin"></ui-icon><num-field label="Weight" value="1 pt" arrow="dn"></num-field><div class="combo b" style="grid-column:1/3"><div class="line" role="img" aria-label="Solid"></div><button aria-label="Stroke type"><ui-icon name="dn"></ui-icon></button></div></section>
<section style="width:130px;padding-left:5px"><div style="display:flex;gap:17px;padding-left:4px"><ui-icon name="dash"></ui-icon><ui-icon name="shadow"></ui-icon><ui-icon name="fx"></ui-icon></div><div class="b" style="display:flex;gap:9px;align-items:center"><ui-icon name="opacity"></ui-icon><num-field label="Opacity" value="100%" arrow="rt" style="width:83px"></num-field></div></section>
<section style="width:89px;padding-left:3px;column-gap:6px;grid-template-columns:34px 34px;justify-items:center"><button class="on" aria-label="No text wrap"><ui-icon name="wrap0"></ui-icon></button><ui-icon name="wrap1"></ui-icon><ui-icon class="b" name="wrap2"></ui-icon><ui-icon class="b" name="wrap3"></ui-icon></section>
<section style="width:152px;padding-left:4px;grid-template-columns:29px 21px 76px"><ui-icon name="corner"></ui-icon><ui-icon name="spin"></ui-icon><num-field label="Corner size" value="4.233 mm"></num-field><div class="b combo" style="grid-column:2/4;width:65px;align-items:center"><div style="background:#a3a3a3;flex:1;height:100%;padding:2px 3px"><ui-icon name="cornerline"></ui-icon></div><button aria-label="Corner shape"><ui-icon name="dn"></ui-icon></button></div></section>
<section style="width:264px;padding-left:10px;column-gap:8px;grid-template-columns:26px 209px"><ui-icon name="objstyle"></ui-icon><div class="combo"><select aria-label="Object style" style="flex:1"><option>[Basic Graphics Frame]+</option></select><button aria-label="Open"><ui-icon name="dn"></ui-icon></button></div><div class="b" style="grid-column:2;display:flex;justify-content:flex-end;gap:12px;padding-right:3px"><ui-icon name="clear"></ui-icon><ui-icon name="clear2"></ui-icon></div></section>
<section style="width:2px"></section>
<ui-icon name="bolt" style="margin:16px 16px 0 auto"></ui-icon>
<section style="width:37px;padding-left:6px"><ui-icon class="two" name="flyout"></ui-icon></section>`);

comp('tool-panel',base+`<style>
:host{display:flex;flex-direction:column;flex:none;width:50px;align-items:center;border-right:2px solid #2a2a2a;border-left:1px solid #333}
.head{align-self:stretch;flex:none;height:19px;background:#303030;border-bottom:1px solid #222;padding:4px 0 0 5px;box-shadow:0 1px #5a5a5a}
.grip{${gripCss};flex:none;margin:5px 0 13px}
button{width:38px;height:33px;flex:none}
button.on{background:#2c2c2c;border:1px solid #222}
hr{width:44px;height:2px;border:0;margin:6px 0 5px;background:#5c5c5c;border-top:1px solid #3a3a3a;flex:none}
</style><div class="head"><ui-icon name="chr"></ui-icon></div><div class="grip"></div>`,function(r){
  const groups=[['select','direct','page','gap','collect'],['type','line','pen','pencil','frame','rect'],['scissors','transform','gradient','feather'],['note','dropper','hand','zoom']];
  const b=(n,c='',s='')=>`<button class="${c}" style="${s}" aria-label="${n}"><ui-icon name="${n}"></ui-icon></button>`;
  let h=groups.map(g=>g.map(n=>b(n,n=='select'?'on':'')).join('')).join('<hr>');
  h+='<hr>'+b('fillstroke','','height:30px')+b('defaults','','height:22px;justify-content:flex-start')+'<hr style="margin:0">'+b('container','','height:22px')+'<hr style="margin:1px 0 4px">'+b('gradmode','on')+'<hr>'+b('screen','on');
  const d=document.createElement('template');d.innerHTML=h;r.append(d.content);
});

comp('h-ruler',`<style>
:host{display:flex;height:25px;background:#1d1d1d;border-bottom:2px solid #989898;overflow:hidden;padding-left:4px;box-sizing:border-box}
div{flex:none;width:45px;box-sizing:border-box;border-left:2px solid #8a8a8a;font-size:14px;line-height:18px;padding-left:1px;color:#d0d0d0;
background:repeating-linear-gradient(90deg,transparent 0 3px,#8a8a8a 3px 4px,transparent 4px 9px) 0 100%/100% 4px no-repeat,linear-gradient(#8a8a8a,#8a8a8a) 21px 100%/2px 8px no-repeat,repeating-linear-gradient(90deg,transparent 0 7px,#8a8a8a 7px 8px,transparent 8px 9px) 0 100%/100% 4px no-repeat}
</style>`,function(r){
  for(let v=-40;v<=430;v+=10){const d=document.createElement('div');if(v>=70)d.textContent=v;r.append(d)}
});

comp('v-ruler',`<style>
:host{display:flex;flex-direction:column;width:25px;flex:none;background:#1d1d1d;border-right:1px solid #6a6a6a;overflow:hidden;box-sizing:border-box}
div{flex:none;height:45px;box-sizing:border-box;border-top:2px solid #6a6a6a;font-size:14px;line-height:13px;padding:1px 12px 0 3px;color:#b4b4b4;overflow-wrap:anywhere;
background:repeating-linear-gradient(transparent 0 3px,#8a8a8a 3px 5px) 100% 0/3px 100% no-repeat,linear-gradient(#8a8a8a,#8a8a8a) 100% 21px/6px 2px no-repeat}
.gap{background:#484848}
</style>`,function(r){
  const add=(v,h)=>{const d=document.createElement('div');d.textContent=v;if(h)d.style.height=h+'px';r.append(d)};
  const gap=h=>{const d=document.createElement('div');d.className='gap';d.style.height=h+'px';r.append(d)};
  gap(23);
  [30,20,10].forEach(v=>add(v));
  for(let v=0;v<=220;v+=10)add(v);
  add('2',17);gap(59);
  [30,20,10].forEach(v=>add(v));
});

comp('page-canvas',`<style>:host{display:block;flex:1;min-width:0;overflow:hidden;background:#606060}svg{display:block;width:100%;height:100%}</style>
<svg><defs>
<pattern id="p" patternUnits="userSpaceOnUse" x="271" y="361" width="15.770" height="15.700"><path d="M0 .8H16M.8 0V16" stroke="#fdf9e6" stroke-width="1.600"/></pattern>
<pattern id="q" patternUnits="userSpaceOnUse" x="271" y="361" width="15.770" height="15.700"><path d="M0 1H16M1 0V16" stroke="#8f8c78" stroke-width="2"/></pattern></defs>
<g transform="translate(-85 -203)">
<path d="M0 203h3000v21H0zM0 1413h3000v57H0z" fill="#404040"/>
<path d="M0 225h3000M0 1413h3000M0 1470h3000" stroke="#0c0c0c" stroke-width="2"/>
<rect x="247" y="340" width="1875" height="958" fill="#5e5e5c"/><rect x="247" y="340" width="1875" height="958" fill="url(#q)"/>
<rect x="247" y="340" width="1875" height="958" fill="none" stroke="#d8606c" stroke-width="2"/>
<path d="M270 360h1833v920H270z" fill="#000"/>
<rect x="271" y="362" width="1829" height="913" fill="#fffffc"/><rect x="271" y="362" width="1829" height="913" fill="url(#p)"/>
<path d="M1185 361v915" stroke="#000" stroke-width="2"/>
<path d="M315 407v824M1082 407v824M1287 407v824M2055 407v824" stroke="#9b4be0" stroke-width="2"/>
<path d="M314 407h769M314 1231h769M1286 407h770M1286 1231h770" stroke="#e24be0" stroke-width="2"/>
<path d="M247 1700V1584h1875v116" fill="none" stroke="#d8606c" stroke-width="2"/>
<path d="M219 1606q3-6 8-3 2 2 4 0 5-3 9 3" fill="#3c4f86" stroke="#dfe4f2" stroke-width="2"/>
</g></svg>`);

comp('doc-view',base+`<style>
:host{display:flex;flex-direction:column;flex:1;min-width:0;border-left:3px solid #303030;border-right:4px solid #303030;background:#303030}
.tabs{height:32px;display:flex;background:linear-gradient(#3a3a3a,#303030);flex:none}
.tab{display:flex;align-items:center;justify-content:flex-end;gap:21px;width:672px;background:#343434;border-right:2px solid #262626;padding-right:11px;font-size:17px;color:#8e8e8e}
.body{flex:1;display:flex;min-height:0}
.left{flex:1;min-width:0;display:flex;flex-direction:column}
.r{display:flex;flex:none}.r b{width:25px;background:#1d1d1d;border-bottom:2px solid #989898}.r h-ruler{flex:1}
.mid{flex:1;display:flex;min-height:0}
.vs{width:25px;flex:none;background:#363636;border:1px solid #2c2c2c;display:flex;flex-direction:column;align-items:center;padding:8px 0 7px;border-bottom:0}
.vs i{width:23px;height:23px;margin:auto 0 75px;background:#949494;outline:1px solid #262626}
.st{height:24px;flex:none;display:flex;align-items:center;background:#4a4a4a;border-top:1px solid #2c2c2c;padding-left:27px;color:#dcdcdc}
.st select,.st span{font-size:14px}
.hs{flex:1;align-self:stretch;background:#363636;border:1px solid #222;border-width:0 2px;display:flex;align-items:center;padding:0 7px 0 8px;margin-left:7px}
.hs i{margin-left:290px;width:788px;height:22px;background:#949494;margin-right:auto}
</style>
<div class="tabs"><div class="tab"><span>Untitled-1.indd @ 75%</span><button aria-label="Close tab"><ui-icon name="xs"></ui-icon></button></div></div>
<div class="body"><div class="left"><div class="r"><b></b><h-ruler></h-ruler></div><div class="mid"><v-ruler></v-ruler><page-canvas></page-canvas></div></div>
<div class="vs"><ui-icon name="up"></ui-icon><i></i><ui-icon name="down"></ui-icon></div></div>
<div class="st"><ui-icon name="preflight"></ui-icon><ui-icon name="share" style="margin:0 14px 0 13px"></ui-icon>
<button aria-label="First page"><ui-icon name="first"></ui-icon></button><button aria-label="Previous page" style="margin:0 15px 0 12px"><ui-icon name="lt"></ui-icon></button>
<select aria-label="Page" style="width:130px"><option>120</option></select><ui-icon name="dn"></ui-icon>
<button aria-label="Next page" style="margin:0 12px 0 17px"><ui-icon name="rt"></ui-icon></button><button aria-label="Last page"><ui-icon name="last"></ui-icon></button>
<ui-icon name="docbtn" style="margin:0 12px 0 13px"></ui-icon>
<select aria-label="Preflight profile" style="width:167px"><option>[Basic] (working)</option></select><ui-icon name="dn" style="margin-right:12px"></ui-icon>
<ui-icon name="ok"></ui-icon><span style="width:97px;margin-left:6px">No errors</span><ui-icon name="dns"></ui-icon>
<div class="hs"><ui-icon name="lt"></ui-icon><i></i><ui-icon name="rt"></ui-icon></div>
<ui-icon name="split" style="margin:0 8px 0 7px"></ui-icon><ui-icon name="grip" style="margin-right:3px"></ui-icon></div>`);

comp('dock-area',base+`<style>
:host{display:block;width:256px;flex:none;background:#4a4a4a}
.head{height:19px;background:linear-gradient(#363636,#2b2b2b);border-bottom:1px solid #222;display:flex;justify-content:flex-end;align-items:center;padding-right:5px}
</style><div class="head"><ui-icon name="chl"></ui-icon></div><slot></slot>`);

comp('panel-group',`<style>
:host{display:block;border-bottom:2px solid #303030;box-shadow:inset 0 2px #585858;padding:5px 0 3px}
i{display:block;${gripCss};margin:0 auto 5px}
</style><i></i><slot></slot>`);

comp('panel-tab',base+`<style>
:host{display:block}
button{justify-content:flex-start;gap:11px;height:44px;width:100%;padding-left:14px;font-size:15px;font-weight:600;color:#dcdcdc}
</style><button><slot></slot></button>`,function(r){
  const i=document.createElement('ui-icon');i.setAttribute('name',this.getAttribute('icon'));r.querySelector('button').prepend(i);
});

comp('float-panel',base+`<style>
:host{position:absolute;right:6px;top:497px;width:117px;display:block;background:#4a4a4a;border:2px solid #2c2c2c;border-right-width:1px;border-radius:5px 5px 0 0;padding-bottom:5px}
.head{height:20px;background:linear-gradient(#363636,#2b2b2b);border-bottom:1px solid #222;display:flex;justify-content:flex-end;align-items:center;gap:15px;padding-right:7px}
i{display:block;${gripCss};margin:6px auto 4px}
</style><div class="head"><ui-icon name="chr"></ui-icon><ui-icon name="x"></ui-icon></div><i></i><slot></slot>`);

comp('drop-menu',`<style>
:host{position:absolute;left:65px;top:43px;width:493px;box-sizing:border-box;display:flex;flex-direction:column;border:1px solid #b4b4b4;border-right-color:#8a8a8a;border-bottom-color:#8a8a8a;padding:2px 2px 4px;box-shadow:inset 0 0 0 2px #fbfbfb,3px 3px 4px #0009;background:linear-gradient(90deg,transparent 45px,#e0e0e0 45px 46px,#fff 46px 47px,transparent 47px),#f0f0f0}
::slotted(hr){height:0;border:0;border-top:1px solid #dedede;border-bottom:1px solid #fff;margin:5px 0 5px 47px}
::slotted(hr:nth-of-type(even)){margin-bottom:6px}
</style><slot></slot>`);

comp('menu-row',base+`<style>
:host{display:block}
button{width:100%;height:35px;padding:0 29px 2px 50px;font-size:18px;color:#111;justify-content:space-between;border:1px solid transparent}
span{font-size:19px}
:host([active]) button{border:2px solid #aecff7;border-radius:4px;background:linear-gradient(#f3f6fb80,#e3ebf8a0);padding:0 28px 1px 49px}
:host([disabled]) button{color:#808080}
svg{margin-right:-15px}
</style><button role="menuitem"><slot></slot></button>`,function(r){
  const k=this.getAttribute('key'),b=r.querySelector('button');
  if(k)b.insertAdjacentHTML('beforeend',`<span>${k}</span>`);
  if(this.hasAttribute('arrow'))b.insertAdjacentHTML('beforeend','<svg width="7" height="12"><path d="M0 0v12l7-6z" fill="#111"/></svg>');
});
</script>
</body>
</html>
